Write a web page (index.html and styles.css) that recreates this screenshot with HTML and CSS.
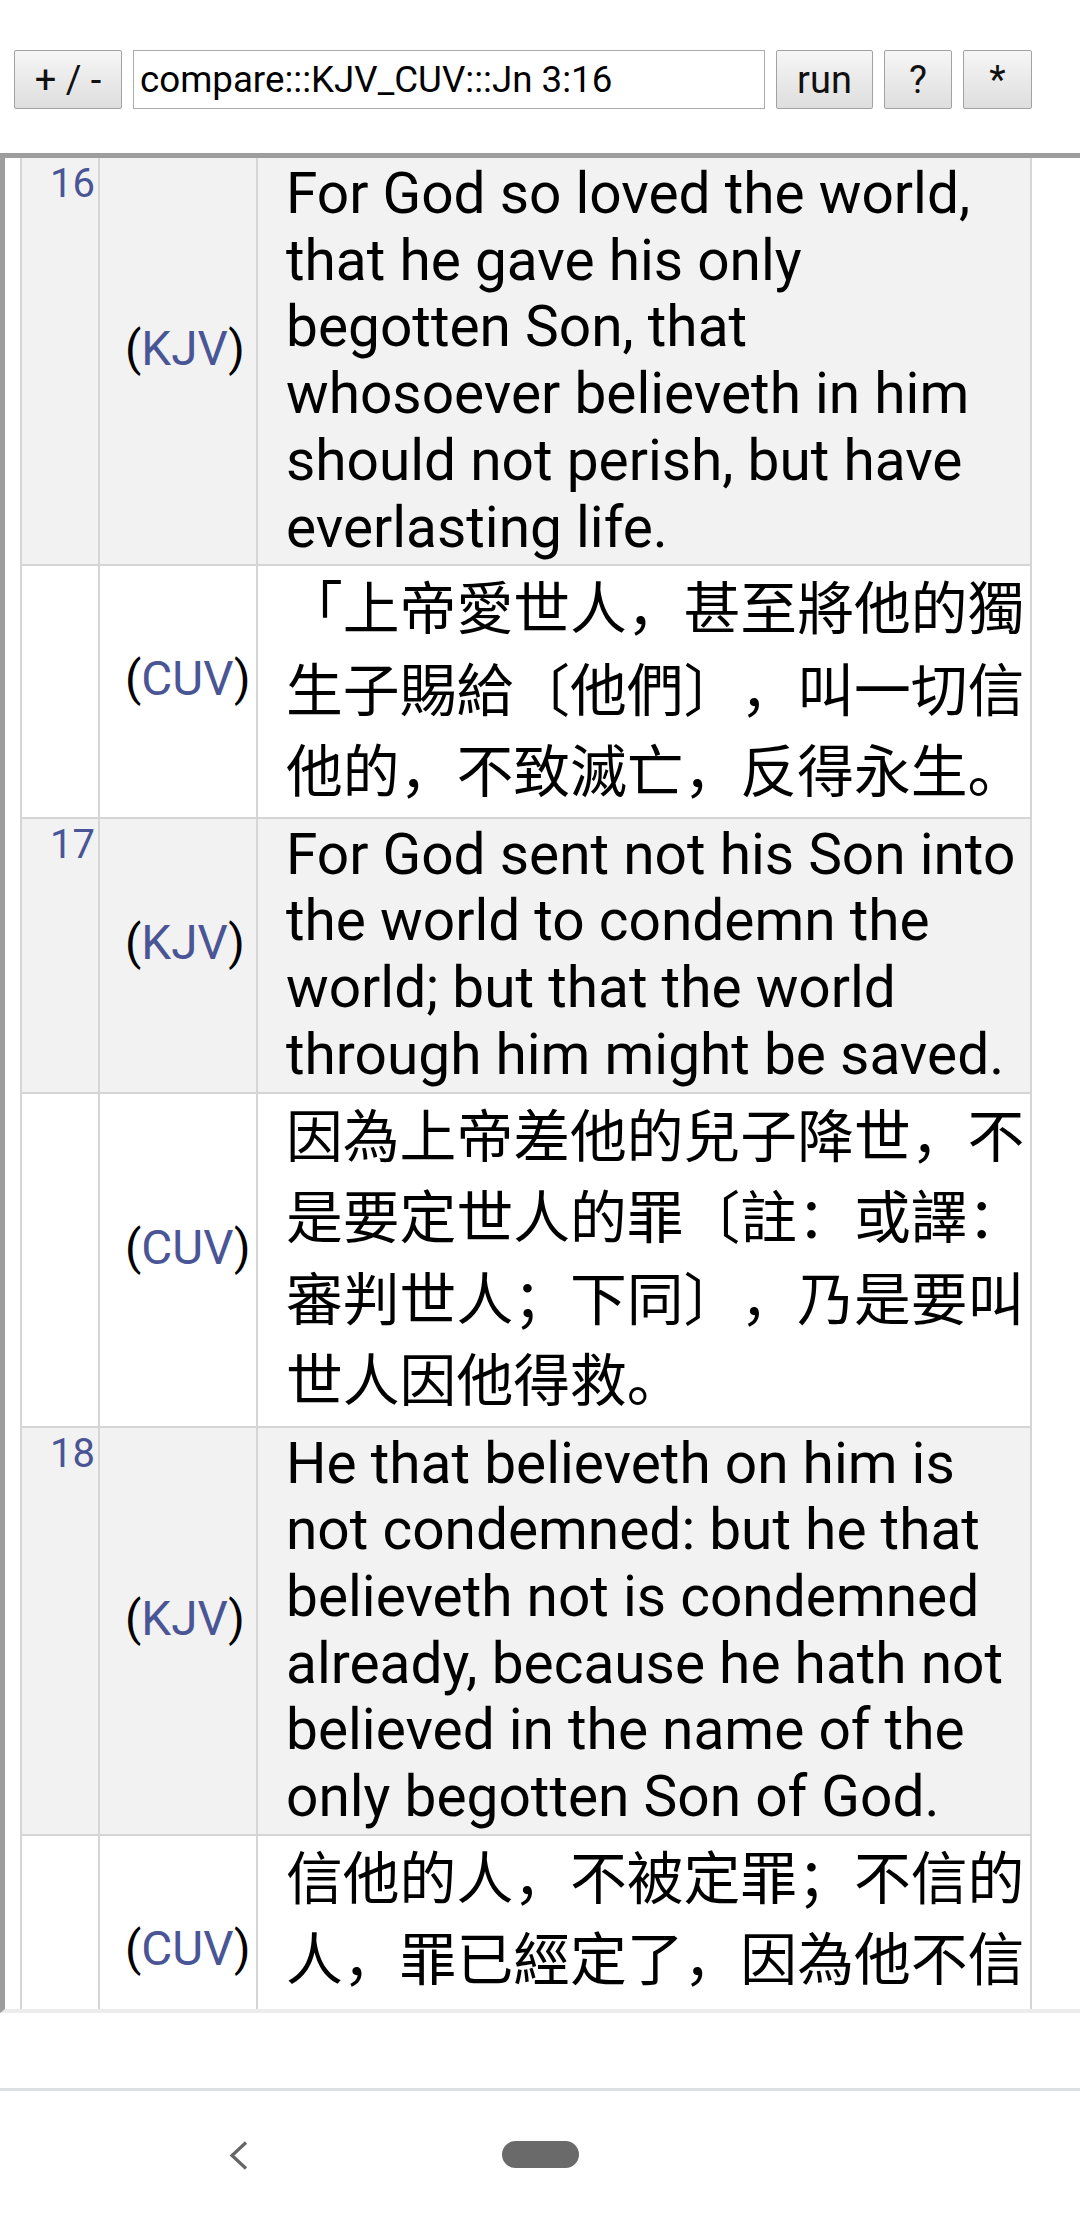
FILE: index.html
```html
<!DOCTYPE html>
<html lang="en">
<head>
<meta charset="utf-8">
<title>compare:::KJV_CUV:::Jn 3:16</title>
<link rel="stylesheet" href="styles.css">
</head>
<body>
<div class="screen">
  <div class="bar">
    <button class="btn btn-pm">+ / -</button>
    <input class="cmd" type="text" value="compare:::KJV_CUV:::Jn 3:16">
    <button class="btn btn-run">run</button>
    <button class="btn btn-q">?</button>
    <button class="btn btn-star">*</button>
  </div>

  <div class="pane">
    <table class="verses">
      <tbody>
        <tr class="kjv">
          <td class="num">16</td>
          <td class="ver">(<span class="tag">KJV</span>)</td>
          <td class="txt">For God so loved the world, that he gave his only begotten Son, that whosoever believeth in him should not perish, but have everlasting life.</td>
        </tr>
        <tr class="cuv">
          <td class="num"></td>
          <td class="ver">(<span class="tag">CUV</span>)</td>
          <td class="txt" lang="zh-Hans">「上帝愛世人，甚至將他的獨生子賜給〔他們〕，叫一切信他的，不致滅亡，反得永生。</td>
        </tr>
        <tr class="kjv">
          <td class="num">17</td>
          <td class="ver">(<span class="tag">KJV</span>)</td>
          <td class="txt">For God sent not his Son into the world to condemn the world; but that the world through him might be saved.</td>
        </tr>
        <tr class="cuv">
          <td class="num"></td>
          <td class="ver">(<span class="tag">CUV</span>)</td>
          <td class="txt" lang="zh-Hans">因為上帝差他的兒子降世，不是要定世人的罪〔註：或譯：審判世人；下同〕，乃是要叫世人因他得救。</td>
        </tr>
        <tr class="kjv">
          <td class="num">18</td>
          <td class="ver">(<span class="tag">KJV</span>)</td>
          <td class="txt">He that believeth on him is not condemned: but he that believeth not is condemned already, because he hath not believed in the name of the only begotten Son of God.</td>
        </tr>
        <tr class="cuv tail">
          <td class="num"></td>
          <td class="ver">(<span class="tag">CUV</span>)</td>
          <td class="txt" lang="zh-Hans">信他的人，不被定罪；不信的人，罪已經定了，因為他不信</td>
        </tr>
      </tbody>
    </table>
  </div>

  <div class="gap"></div>

  <div class="navbar">
    <svg class="back" width="20" height="30" viewBox="0 0 20 30" aria-hidden="true">
      <polyline points="17,1.5 3,14.5 17,27.5" fill="none" stroke="#666666" stroke-width="3.2" stroke-linecap="butt" stroke-linejoin="miter"/>
    </svg>
    <div class="home"></div>
    <div class="spacer"></div>
  </div>
</div>
</body>
</html>
```

FILE: styles.css
```css
html, body {
  margin: 0;
  padding: 0;
  background: #ffffff;
}

body {
  font-family: "Roboto", "Noto Sans CJK SC", sans-serif;
  color: #000000;
}

.screen {
  width: 1080px;
  height: 2220px;
  display: flex;
  flex-direction: column;
  overflow: hidden;
}

/* ---------- top command bar ---------- */
.bar {
  height: 153px;
  box-sizing: border-box;
  padding: 50px 0 0 14px;
  display: flex;
  align-items: flex-start;
  gap: 11px;
  flex: none;
}

.btn {
  height: 59px;
  box-sizing: border-box;
  border: 1px solid #a2a2a2;
  border-radius: 2px;
  background: linear-gradient(#f6f6f6, #dedede);
  font-family: "Roboto", sans-serif;
  font-size: 38px;
  color: #111111;
  padding: 0;
  margin: 0;
  line-height: 1;
}

.btn-pm { width: 108px; }
.btn-run { width: 97px; }
.btn-q { width: 68px; }
.btn-star { width: 69px; }

.cmd {
  width: 632px;
  height: 59px;
  box-sizing: border-box;
  border: 1px solid #ababab;
  border-radius: 0;
  background: #ffffff;
  font-family: "Roboto", sans-serif;
  font-size: 36.7px;
  color: #000000;
  padding: 0 0 0 6px;
  margin: 0;
  outline: none;
}

/* ---------- scrolling pane ---------- */
.pane {
  height: 1860px;
  box-sizing: border-box;
  border-top: 5px solid #9d9d9d;
  border-left: 5px solid #9d9d9d;
  border-bottom: 4px solid #ececec;
  overflow: hidden;
  flex: none;
  background: #ffffff;
}

.verses {
  margin-left: 15px;
  border-collapse: separate;
  border-spacing: 0;
  table-layout: fixed;
  width: 1012px;
  border-left: 2px solid #d5d5d5;
}

.verses td {
  box-sizing: border-box;
  border-right: 2px solid #d5d5d5;
  border-bottom: 2px solid #d5d5d5;
}

.kjv td { background: #f2f2f2; }
.cuv td { background: #ffffff; }

.num {
  width: 78px;
  vertical-align: top;
  text-align: right;
  padding: 2px 3px 0 0;
  font-size: 40px;
  line-height: normal;
  color: #4a5596;
}

.ver {
  width: 158px;
  vertical-align: middle;
  text-align: left;
  padding: 0 0 24px 25px;
  font-size: 47.6px;
  line-height: normal;
  white-space: nowrap;
  color: #000000;
}

.tag { color: #4a5596; }

.txt {
  width: 774px;
  vertical-align: top;
  padding: 3px 1px 3px 28px;
  font-size: 56.8px;
  text-spacing-trim: space-all;
}

.kjv .txt { line-height: 66.7px; }
.cuv .txt {
  line-height: 81.5px;
  font-family: "Roboto", "Noto Sans CJK SC", sans-serif;
}

/* last row continues below the fold: three lines tall */
.tail td { height: 252px; }

/* ---------- bottom area ---------- */
.gap {
  height: 75px;
  flex: none;
  background: #ffffff;
}

.navbar {
  flex: 1;
  border-top: 3px solid #dedfe1;
  background: #ffffff;
  display: flex;
  align-items: flex-start;
  padding-top: 50px;
  box-sizing: border-box;
}

.back {
  margin-left: 229px;
  flex: none;
}

.home {
  margin-left: 253px;
  margin-top: 0;
  width: 77px;
  height: 27px;
  border-radius: 13.5px;
  background: #6a6a6a;
  flex: none;
}

.spacer { flex: 1; }
```
